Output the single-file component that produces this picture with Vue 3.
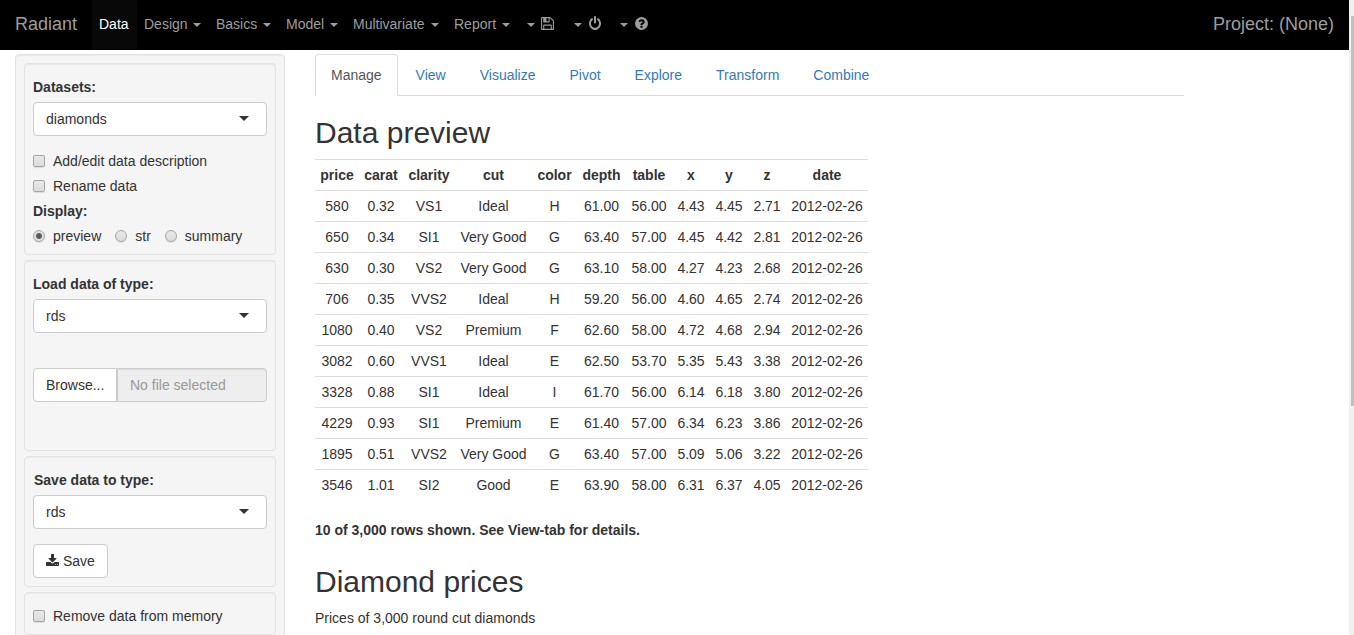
<script setup>
const menus = ['Design', 'Basics', 'Model', 'Multivariate', 'Report']
const menuWidths = [72, 70, 67, 101, 71]
const tabs = ['Manage', 'View', 'Visualize', 'Pivot', 'Explore', 'Transform', 'Combine']
const columns = ['price', 'carat', 'clarity', 'cut', 'color', 'depth', 'table', 'x', 'y', 'z', 'date']
const columnWidths = [44, 44, 52, 77, 45, 49, 46, 38, 38, 38, 82]
const date = '2012-02-26'
const rows = [
  ['580', '0.32', 'VS1', 'Ideal', 'H', '61.00', '56.00', '4.43', '4.45', '2.71', date],
  ['650', '0.34', 'SI1', 'Very Good', 'G', '63.40', '57.00', '4.45', '4.42', '2.81', date],
  ['630', '0.30', 'VS2', 'Very Good', 'G', '63.10', '58.00', '4.27', '4.23', '2.68', date],
  ['706', '0.35', 'VVS2', 'Ideal', 'H', '59.20', '56.00', '4.60', '4.65', '2.74', date],
  ['1080', '0.40', 'VS2', 'Premium', 'F', '62.60', '58.00', '4.72', '4.68', '2.94', date],
  ['3082', '0.60', 'VVS1', 'Ideal', 'E', '62.50', '53.70', '5.35', '5.43', '3.38', date],
  ['3328', '0.88', 'SI1', 'Ideal', 'I', '61.70', '56.00', '6.14', '6.18', '3.80', date],
  ['4229', '0.93', 'SI1', 'Premium', 'E', '61.40', '57.00', '6.34', '6.23', '3.86', date],
  ['1895', '0.51', 'VVS2', 'Very Good', 'G', '63.40', '57.00', '5.09', '5.06', '3.22', date],
  ['3546', '1.01', 'SI2', 'Good', 'E', '63.90', '58.00', '6.31', '6.37', '4.05', date],
]
</script>

<template>
  <div class="window">
    <div class="page">
      <nav class="navbar">
        <a class="brand">Radiant</a>
        <a class="item active">Data</a>
        <a v-for="(m, i) in menus" :key="m" class="item menu" :style="{ width: menuWidths[i] + 'px' }">{{ m }}<i class="caret"></i></a>
        <a class="item icon-item first">
          <i class="caret"></i>
          <svg width="13" height="15" viewBox="0 0 1536 1792"><path fill="currentColor" transform="translate(0 1536) scale(1 -1)" d="M384 0h768v384h-768v-384zM1280 0h128v896q0 14 -10 38.500t-20 34.500l-281 281q-10 10 -34 20t-39 10v-416q0 -40 -28 -68t-68 -28h-576q-40 0 -68 28t-28 68v416h-128v-1280h128v416q0 40 28 68t68 28h832q40 0 68 -28t28 -68v-416zM896 928v320q0 13 -9.500 22.500t-22.500 9.500h-192q-13 0 -22.500 -9.500t-9.500 -22.500v-320q0 -13 9.500 -22.500t22.500 -9.500h192q13 0 22.500 9.500t9.500 22.500zM1536 896v-928q0 -40 -28 -68t-68 -28h-1344q-40 0 -68 28t-28 68v1344q0 40 28 68t68 28h928q40 0 88 -20t76 -48l280 -280q28 -28 48 -76t20 -88z" /></svg>
        </a>
        <a class="item icon-item second">
          <i class="caret"></i>
          <svg width="12" height="15" viewBox="0 0 1536 1792" preserveAspectRatio="none"><path fill="currentColor" transform="translate(0 1536) scale(1 -1)" d="M1536 640q0 -156 -61 -298t-164 -245t-245 -164t-298 -61t-298 61t-245 164t-164 245t-61 298q0 182 80.500 343t226.500 270q43 32 95.500 25t83.500 -50q32 -42 24.500 -94.500t-49.500 -84.500q-98 -74 -151.500 -181t-53.500 -228q0 -104 40.500 -198.500t109.500 -163.500t163.500 -109.500t198.500 -40.500t198.500 40.500t163.500 109.500t109.500 163.500t40.500 198.500q0 121 -53.500 228t-151.500 181q-42 32 -49.500 84.500t24.500 94.500q31 43 84 50t95 -25q146 -109 226.500 -270t80.500 -343zM896 1408v-640q0 -52 -38 -90t-90 -38t-90 38t-38 90v640q0 52 38 90t90 38t90 -38t38 -90z" /></svg>
        </a>
        <a class="item icon-item third">
          <i class="caret"></i>
          <svg width="13" height="15" viewBox="0 0 1536 1792"><path fill="currentColor" transform="translate(0 1536) scale(1 -1)" d="M896 160v192q0 14 -9 23t-23 9h-192q-14 0 -23 -9t-9 -23v-192q0 -14 9 -23t23 -9h192q14 0 23 9t9 23zM1152 832q0 88 -55.500 163t-138.500 116t-170 41q-243 0 -371 -213q-15 -24 8 -42l132 -100q7 -6 19 -6q16 0 25 12q53 68 86 92q34 24 86 24q48 0 85.500 -26t37.500 -59q0 -38 -20 -61t-68 -45q-63 -28 -115.500 -86.500t-52.500 -125.500v-36q0 -14 9 -23t23 -9h192q14 0 23 9t9 23q0 19 21.500 49.500t54.500 49.500q32 18 49 28.500t46 35t44.500 48t28 60.500t12.500 81zM1536 640q0 -209 -103 -385.500t-279.500 -279.500t-385.500 -103t-385.500 103t-279.500 279.500t-103 385.500t103 385.500t279.500 279.500t385.500 103t385.500 -103t279.500 -279.500t103 -385.500z" /></svg>
        </a>
        <span class="project">Project: (None)</span>
      </nav>

      <div class="content">
        <aside class="sidebar">
          <section class="well">
            <label class="title">Datasets:</label>
            <div class="select">diamonds<i class="arrow"></i></div>
            <div class="check spaced"><i class="box"></i>Add/edit data description</div>
            <div class="check next"><i class="box"></i>Rename data</div>
            <label class="title display">Display:</label>
            <div class="radios">
              <span class="check"><i class="box round on"></i>preview</span>
              <span class="check"><i class="box round"></i>str</span>
              <span class="check"><i class="box round"></i>summary</span>
            </div>
          </section>

          <section class="well load">
            <label class="title">Load data of type:</label>
            <div class="select">rds<i class="arrow"></i></div>
            <div class="file">
              <span class="browse">Browse...</span>
              <span class="filename">No file selected</span>
            </div>
          </section>

          <section class="well">
            <label class="title shifted">Save data to type:</label>
            <div class="select">rds<i class="arrow"></i></div>
            <button class="save">
              <svg width="13" height="14" viewBox="0 0 1664 1792"><path fill="currentColor" transform="translate(0 1536) scale(1 -1)" d="M1280 192q0 26 -19 45t-45 19t-45 -19t-19 -45t19 -45t45 -19t45 19t19 45zM1536 192q0 26 -19 45t-45 19t-45 -19t-19 -45t19 -45t45 -19t45 19t19 45zM1664 416v-320q0 -40 -28 -68t-68 -28h-1472q-40 0 -68 28t-28 68v320q0 40 28 68t68 28h465l135 -136q58 -56 136 -56t136 56l136 136h464q40 0 68 -28t28 -68zM1339 985q17 -41 -14 -70l-448 -448q-18 -19 -45 -19t-45 19l-448 448q-31 29 -14 70q17 39 59 39h256v448q0 26 19 45t45 19h256q26 0 45 -19t19 -45v-448h256q42 0 59 -39z" /></svg>
              Save
            </button>
          </section>

          <section class="well">
            <div class="check"><i class="box"></i>Remove data from memory</div>
          </section>
        </aside>

        <main class="main">
          <div class="tabs">
            <a v-for="(t, i) in tabs" :key="t" class="tab" :class="{ current: i === 0 }">{{ t }}</a>
          </div>
          <h2>Data preview</h2>
          <table>
            <colgroup>
              <col v-for="(w, i) in columnWidths" :key="i" :style="{ width: w + 'px' }" />
            </colgroup>
            <thead>
              <tr><th v-for="c in columns" :key="c">{{ c }}</th></tr>
            </thead>
            <tbody>
              <tr v-for="r in rows" :key="r[0]"><td v-for="(v, i) in r" :key="i">{{ v }}</td></tr>
            </tbody>
          </table>
          <p class="note">10 of 3,000 rows shown. See View-tab for details.</p>
          <h2 class="second-heading">Diamond prices</h2>
          <p>Prices of 3,000 round cut diamonds</p>
        </main>
      </div>
    </div>
    <div class="scrollbar"><div class="thumb"></div></div>
  </div>
</template>

<style>
body {
  margin: 0;
  overflow: hidden;
}
</style>

<style scoped>
* {
  box-sizing: border-box;
}
.window {
  display: flex;
  width: 1354px;
  height: 635px;
  overflow: hidden;
  background: #fff;
  color: #333;
  font: 14px/20px "Liberation Sans", Arial, sans-serif;
}
.page {
  width: 1349px;
}
.navbar {
  display: flex;
  height: 50px;
  padding: 0 15px 1px;
  background: #000;
  color: #9d9d9d;
}
.brand {
  width: 77px;
  padding-top: 14px;
  font-size: 18px;
}
.item {
  display: flex;
  align-items: center;
  height: 49px;
  padding: 0 7px 2px;
  white-space: nowrap;
}
.menu {
  justify-content: space-between;
  padding-right: 8px;
}
.active {
  width: 45px;
  background: #080808;
  color: #fff;
}
.caret {
  margin-top: 2px;
  border: 4px solid transparent;
  border-top-color: currentColor;
  border-bottom: 0;
}
.icon-item {
  gap: 7px;
  padding: 0 0 2px;
}
.icon-item.first {
  margin-left: 9px;
  gap: 6px;
}
.icon-item.second {
  margin-left: 20px;
}
.icon-item.third {
  margin-left: 19px;
}
.project {
  margin-left: auto;
  padding-top: 14px;
  font-size: 18px;
}
.content {
  display: flex;
  gap: 30px;
  padding: 4px 0 0 15px;
}
.sidebar {
  width: 270px;
  height: 600px;
  padding: 8px;
  border: 1px solid #e3e3e3;
  border-radius: 4px;
  background: #f5f5f5;
  box-shadow: inset 0 1px 1px rgba(0, 0, 0, 0.05);
}
.well {
  margin-bottom: 5px;
  padding: 13px 8px 8px;
  border: 1px solid #e3e3e3;
  border-radius: 4px;
  box-shadow: inset 0 1px 1px rgba(0, 0, 0, 0.05);
}
.load {
  height: 191px;
}
.title {
  display: block;
  margin-bottom: 5px;
  font-weight: bold;
}
.shifted {
  padding-left: 1px;
}
.select {
  display: flex;
  align-items: center;
  justify-content: space-between;
  height: 34px;
  padding: 0 17px 0 12px;
  border: 1px solid #ccc;
  border-radius: 4px;
  background: #fff;
}
.arrow {
  border: 5px solid transparent;
  border-top-color: #333;
  border-bottom: 0;
  margin-top: -2px;
}
.check {
  display: flex;
  align-items: center;
}
.spaced {
  margin-top: 15px;
}
.next {
  margin-top: 5px;
}
.box {
  width: 12px;
  height: 12px;
  margin-right: 8px;
  border: 1px solid #a6a6a6;
  border-radius: 2px;
  background: linear-gradient(#e8e8e8, #dcdcdc);
  box-shadow: 0 1px 1px rgba(0, 0, 0, 0.1);
}
.round {
  border-radius: 50%;
}
.on {
  background: radial-gradient(circle, #5c5c5c 2.5px, #e2e2e2 3.5px);
}
.display {
  margin-top: 5px;
}
.radios {
  display: flex;
  gap: 14px;
}
.file {
  display: flex;
  height: 34px;
  margin-top: 35px;
  line-height: 32px;
}
.browse {
  width: 84px;
  padding-left: 12px;
  border: 1px solid #ccc;
  border-radius: 4px 0 0 4px;
  background: #fff;
}
.filename {
  flex: 1;
  padding-left: 12px;
  border: 1px solid #ccc;
  border-radius: 0 4px 4px 0;
  background: #eee;
  color: #999;
  box-shadow: inset 0 1px 1px rgba(0, 0, 0, 0.075);
}
.save {
  display: flex;
  align-items: center;
  gap: 4px;
  width: 75px;
  height: 34px;
  margin-top: 15px;
  padding: 0 12px;
  border: 1px solid #ccc;
  border-radius: 4px;
  background: #fff;
  color: #333;
  font: inherit;
}
.main {
  width: 869px;
}
.tabs {
  display: flex;
  gap: 2px;
  height: 42px;
  border-bottom: 1px solid #ddd;
}
.tab {
  height: 42px;
  padding: 10px 15px;
  border: 1px solid transparent;
  border-radius: 4px 4px 0 0;
  color: #337ab7;
}
.current {
  border-color: #ddd;
  border-bottom-color: #fff;
  background: #fff;
  color: #555;
}
h2 {
  margin: 20px 0 10px;
  font-size: 30px;
  font-weight: 500;
  line-height: 33px;
}
table {
  width: 553px;
  border-spacing: 0;
  table-layout: fixed;
}
th,
td {
  padding: 5px 0;
  border-top: 1px solid #ddd;
  text-align: center;
  white-space: nowrap;
}
p {
  margin: 0;
}
.note {
  margin-top: 20px;
  font-weight: bold;
}
.second-heading {
  margin-top: 25px;
}
.scrollbar {
  width: 5px;
  padding: 16px 0 0 2px;
  background: #f1f1f1;
}
.thumb {
  height: 390px;
  background: #c1c1c1;
}
</style>
